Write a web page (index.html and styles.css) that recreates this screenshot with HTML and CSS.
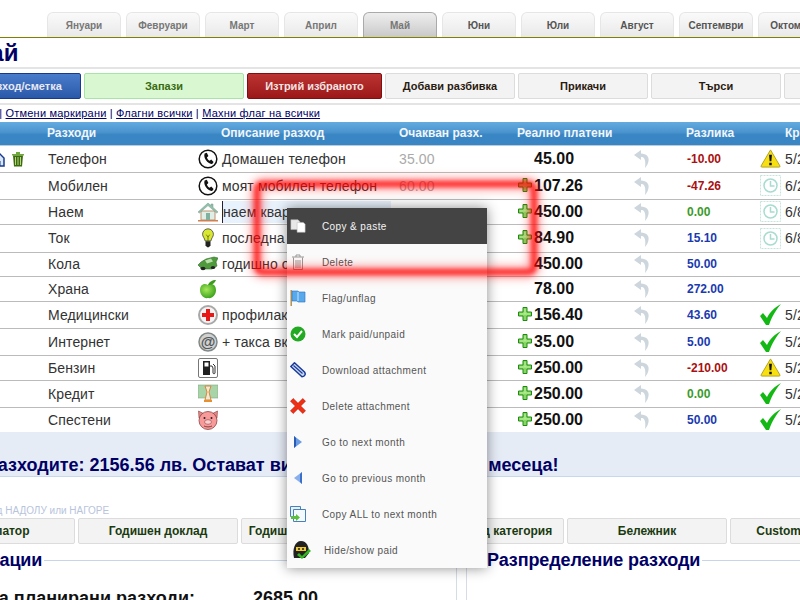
FILE: index.html
```html
<!DOCTYPE html>
<html lang="bg">
<head>
    <meta charset="UTF-8">
    <title>Бюджет - Май</title>
    <link rel="stylesheet" href="styles.css">
</head>
<body>
    <svg class="defs" xmlns="http://www.w3.org/2000/svg">
        <symbol id="i-phone" viewBox="0 0 20 20">
            <circle cx="10" cy="10" r="8.8" fill="#fff" stroke="#111" stroke-width="1.5"/>
            <path d="M6.6 4.6l2.2-.8 1.6 3.2-1.5 1.4c.5 1.4 1.4 2.6 2.8 3.4l1.5-1.2 2.4 2.4-1.2 1.8c-3.6 1.4-9.6-5.6-7.800-10.200z" fill="#111"/>
        </symbol>
        <symbol id="i-house" viewBox="0 0 20 20">
            <path d="M3 9h14v9H3z" fill="#dfeee6" stroke="#c09070"/>
            <path d="M0 10L10 1l3 2.6V2h2v3.4L20 10l-1.400 1L10 3.600 1.400 11z" fill="#8fc0a8" stroke="#7a9a90" stroke-width=".5"/>
            <path d="M8 11h4v7H8z" fill="#7fb0a0"/>
            <path d="M0 18h20v1.500H0z" fill="#d08050"/>
        </symbol>
        <symbol id="i-bulb" viewBox="0 0 16 24">
            <path d="M8 1a6.500 6.500 0 0 0-6.500 6.500c0 3 2.500 4.500 3 8h7c.5-3.500 3-5 3-8A6.500 6.500 0 0 0 8 1z" fill="#d8e830" stroke="#444"/>
            <path d="M6 8l2 3 2-3M8 11v5" fill="none" stroke="#667010"/>
            <path d="M5 16h6v5l-2 2H7l-2-2z" fill="#222"/>
        </symbol>
        <symbol id="i-car" viewBox="0 0 20 16">
            <path d="M0 9l3-3 5-3 8-2 4 1-2 4 1 4-5 3H4z" fill="#4f9a3c" stroke="#2d6a28" stroke-width=".6"/>
            <path d="M7 4.500l6-2 2 3-6 2z" fill="#b8e0a8"/>
            <ellipse cx="5" cy="12.500" rx="2.500" ry="1.800" fill="#222"/>
            <ellipse cx="15" cy="11.500" rx="2.200" ry="1.600" fill="#222"/>
        </symbol>
        <symbol id="i-apple" viewBox="0 0 18 20">
            <defs><radialGradient id="g-apple" cx=".4" cy=".4" r=".7"><stop offset="0" stop-color="#a6e85a"/><stop offset="1" stop-color="#2f9a16"/></radialGradient></defs>
            <path d="M9 6C5 3.500 1 6 1 11c0 5 4 9 8 8 4 1 8-3 8-8 0-5-4-7.500-8-5z" fill="url(#g-apple)"/>
            <path d="M9 6c1-3 4-5 8-5-1 3-4 5-8 5z" fill="#3c9a1e"/>
        </symbol>
        <symbol id="i-med" viewBox="0 0 20 20">
            <circle cx="10" cy="10" r="9" fill="#f4f4f4" stroke="#a8a8a8" stroke-width="2"/>
            <path d="M8 4h4v4h4v4h-4v4H8v-4H4V8h4z" fill="#e81818"/>
        </symbol>
        <symbol id="i-at" viewBox="0 0 20 20">
            <circle cx="10" cy="10" r="9" fill="#d0d0d0" stroke="#808888" stroke-width="1.500"/>
            <text x="10" y="15" font-family="Liberation Sans, sans-serif" font-size="15" font-weight="bold" fill="#505858" text-anchor="middle">@</text>
        </symbol>
        <symbol id="i-fuel" viewBox="0 0 20 20">
            <rect x=".5" y=".5" width="19" height="19" rx="1.500" fill="#fff" stroke="#777"/>
            <path d="M5 3h7v14H5z" fill="#222"/>
            <path d="M6.500 4.500h4v4h-4z" fill="#fff"/>
            <path d="M12 8h2l1 2v5c0 1 2 1 2 0V8l-2-2" fill="none" stroke="#333"/>
        </symbol>
        <symbol id="i-loan" viewBox="0 0 20 20">
            <rect y="1" width="20" height="13" fill="#a8d4a8" stroke="#80a880" stroke-width=".6"/>
            <path d="M7 2h6l-2 6 2 8H7l2-8z" fill="#f0e8d8" stroke="#d88838"/>
            <path d="M6 16h8v2H6z" fill="#e89030"/>
        </symbol>
        <symbol id="i-pig" viewBox="0 0 20 20">
            <path d="M.5 1l5 2.500h9L19.500 1 19 8H1z" fill="#e88888" stroke="#8a4040" stroke-width=".6"/>
            <circle cx="10" cy="10.500" r="9" fill="#f89a9a" stroke="#8a4040" stroke-width=".8"/>
            <circle cx="6.500" cy="8" r="1" fill="#222"/>
            <circle cx="13.500" cy="8" r="1" fill="#222"/>
            <ellipse cx="10" cy="12" rx="3.500" ry="2.300" fill="#fcd0d0" stroke="#8a4040" stroke-width=".6"/>
            <path d="M6 16c2 1.200 6 1.200 8 0" fill="none" stroke="#8a4040"/>
        </symbol>
        <symbol id="i-plus" viewBox="0 0 14 14">
            <path d="M5 .5h4v4.500h4.500v4H9v4.500H5V9H.5V5H5z" fill="#86d862" stroke="#1f8a10"/>
            <path d="M6.500 2h1v4.500H12v1H2v-1h4.500z" fill="#c0f4a0"/>
        </symbol>
        <symbol id="i-undo" viewBox="0 0 16 18">
            <path d="M7 0L0 5l7 5V7c3.500 0 5 3 4 11 4-4 7-14-4-14.500z" fill="#cdd6dc"/>
        </symbol>
        <symbol id="i-warn" viewBox="0 0 22 20">
            <path d="M11 1L21 18a1 1 0 0 1-1 1H2a1 1 0 0 1-1-1z" fill="#f8e010" stroke="#b0a020"/>
            <path d="M9.500 6h3l-.6 7h-1.800zM9.700 14.500h2.600V17H9.700z" fill="#111"/>
        </symbol>
        <symbol id="i-check" viewBox="0 0 21 21">
            <path d="M0 12l3-3 4 5C10 8 14 4 21 0c-5 6-9 12-12 21h-3z" fill="#14b814"/>
        </symbol>
        <symbol id="i-clock" viewBox="0 0 21 21">
            <rect x=".5" y=".5" width="20" height="20" fill="#fff" stroke="#c4e4dc" stroke-dasharray="2 1"/>
            <circle cx="10.500" cy="10.500" r="6.500" fill="none" stroke="#a8dcd0" stroke-width="1.500"/>
            <path d="M10.500 6v5h4" fill="none" stroke="#a8dcd0" stroke-width="1.500"/>
        </symbol>
        <symbol id="i-edit" viewBox="0 0 14 16">
            <path d="M1 7l6-6 6 6v8H1z" fill="#d8e8f8" stroke="#1a3a90" stroke-width="1.500"/>
            <path d="M5 15v-5h4v5" fill="none" stroke="#1a3a90"/>
        </symbol>
        <symbol id="i-bin" viewBox="0 0 14 16">
            <path d="M1 3h12v1.500H1zM5 1h4v2H5z" fill="#6cab34"/>
            <path d="M2 4.500h10l-1 11H3z" fill="#3c6a10"/>
            <path d="M4.500 6v8M7 6v8M9.500 6v8" stroke="#b8d880"/>
        </symbol>
        <symbol id="m-copy" viewBox="0 0 18 16">
            <path d="M1 1h8l2 2v9H1z" fill="#e8e8e8" stroke="#bbb" stroke-width=".6"/>
            <path d="M8 4h7l2 2v9H8z" fill="#fff" stroke="#bbb" stroke-width=".6"/>
        </symbol>
        <symbol id="m-bin" viewBox="0 0 14 16">
            <path d="M1 3h12M5 3V1h4v2M2.500 3.500v12h9v-12M5 6v8M7 6v8M9 6v8" fill="none" stroke="#999"/>
        </symbol>
        <symbol id="m-flag" viewBox="0 0 16 16">
            <path d="M.5 0h1.400v16H.5z" fill="#b08840"/>
            <path d="M2 1h6l1 1h6v10H8l-1-1H2z" fill="#58a8ec" stroke="#2a70c0" stroke-width=".6"/>
            <path d="M8 2v9" stroke="#c8e4fa"/>
        </symbol>
        <symbol id="m-ok" viewBox="0 0 16 16">
            <circle cx="8" cy="8" r="7.500" fill="#22aa22"/>
            <path d="M4 8l3 3 5-6" fill="none" stroke="#fff" stroke-width="2"/>
        </symbol>
        <symbol id="m-clip" viewBox="0 0 16 16">
            <path d="M.8 4.500L4.500.8l10 9.200c1.500 2 .5 4.500-2.500 4.700z" fill="#c8d8f4" stroke="#1a3a98" stroke-width="1.500" stroke-linejoin="round"/>
            <path d="M3.500 3.500l9 8" stroke="#1a3a98" stroke-width="1.200"/>
        </symbol>
        <symbol id="m-del" viewBox="0 0 15 15">
            <path d="M3 .5l4.500 4.500L12 .5 14.500 3 10 7.500l4.500 4.500-2.500 2.500L7.500 10 3 14.500.5 12 5 7.500.5 3z" fill="#f03014" stroke="#b81808" stroke-width=".6"/>
        </symbol>
        <symbol id="m-next" viewBox="0 0 16 16">
            <path d="M4 2l8 6-8 6z" fill="#6a9ce4"/>
            <path d="M4 2v12l2-2V4z" fill="#2a5ab8"/>
        </symbol>
        <symbol id="m-prev" viewBox="0 0 16 16">
            <path d="M12 2L4 8l8 6z" fill="#8ab0ec"/>
            <path d="M12 2v12l-2-2V4z" fill="#3a70cc"/>
        </symbol>
        <symbol id="m-all" viewBox="0 0 16 16">
            <path d="M.5.500h10v10H.500z" fill="#e4f0fa" stroke="#4a80b8"/>
            <path d="M3.500 3.500h12v12h-12z" fill="#f4f9fd" stroke="#4a80b8"/>
            <path d="M1 10h5V8l4 3.500L6 15v-2H1z" fill="#5cc03c"/>
        </symbol>
        <symbol id="m-ninja" viewBox="0 0 20 18">
            <path d="M2 17C0 8 3 0 9 0s8 6 8 12l-4 5z" fill="#222"/>
            <path d="M4 6h10v4H4z" fill="#f0c830"/>
            <circle cx="7" cy="8" r="1" fill="#222"/>
            <circle cx="11" cy="8" r="1" fill="#222"/>
            <path d="M7 12l3 3 7-7 2 2-9 8-5-4z" fill="#34b820"/>
        </symbol>
    </svg>

    <div class="page">
        <div class="tabs">
            <a class="tab">Януари</a>
            <a class="tab">Февруари</a>
            <a class="tab">Март</a>
            <a class="tab">Април</a>
            <a class="tab active">Май</a>
            <a class="tab later">Юни</a>
            <a class="tab later">Юли</a>
            <a class="tab later">Август</a>
            <a class="tab later">Септември</a>
            <a class="tab later">Октомври</a>
        </div>

        <h1 class="month">Май</h1>

        <div class="toolbar">
            <button class="btn btn-blue w141">Нов разход/сметка</button>
            <button class="btn btn-green w160">Запази</button>
            <button class="btn btn-red w135">Изтрий избраното</button>
            <button class="btn w130">Добави разбивка</button>
            <button class="btn w130">Прикачи</button>
            <button class="btn w130">Търси</button>
            <button class="btn w130">Копирай</button>
        </div>

        <div class="links">
            <a>Маркирай всички</a> | <a>Отмени маркирани</a> | <a>Флагни всички</a> | <a>Махни флаг на всички</a>
        </div>

        <table class="bills">
            <thead>
                <tr>
                    <th class="c-act"></th>
                    <th class="c-name">Разходи</th>
                    <th class="c-desc">Описание разход</th>
                    <th class="c-exp">Очакван разх.</th>
                    <th class="c-paid">Реално платени</th>
                    <th class="c-undo"></th>
                    <th class="c-diff">Разлика</th>
                    <th class="c-due">Краен срок</th>
                </tr>
            </thead>
            <tbody>
                <tr class="h27">
                    <td class="act"><svg class="ic-edit"><use href="#i-edit"/></svg><svg class="ic-bin"><use href="#i-bin"/></svg></td>
                    <td class="name">Телефон</td>
                    <td><span class="desc"><svg class="ic"><use href="#i-phone"/></svg>Домашен телефон</span></td>
                    <td class="exp">35.00</td>
                    <td class="paid"><span class="noplus"></span>45.00</td>
                    <td><svg class="ic-undo"><use href="#i-undo"/></svg></td>
                    <td class="diff neg">-10.00</td>
                    <td><span class="due"><svg class="ic-state"><use href="#i-warn"/></svg>5/25/2012</span></td>
                </tr>
                <tr class="h27">
                    <td></td>
                    <td class="name">Мобилен</td>
                    <td><span class="desc"><svg class="ic"><use href="#i-phone"/></svg>моят мобилен телефон</span></td>
                    <td class="exp">60.00</td>
                    <td class="paid"><svg class="ic-plus"><use href="#i-plus"/></svg>107.26</td>
                    <td><svg class="ic-undo"><use href="#i-undo"/></svg></td>
                    <td class="diff neg">-47.26</td>
                    <td><span class="due"><svg class="ic-state"><use href="#i-clock"/></svg>6/25/2012</span></td>
                </tr>
                <tr class="h25">
                    <td></td>
                    <td class="name">Наем</td>
                    <td><span class="desc"><svg class="ic"><use href="#i-house"/></svg><span class="focused">наем квартира</span></span></td>
                    <td class="exp"></td>
                    <td class="paid"><svg class="ic-plus"><use href="#i-plus"/></svg>450.00</td>
                    <td><svg class="ic-undo"><use href="#i-undo"/></svg></td>
                    <td class="diff zero">0.00</td>
                    <td><span class="due"><svg class="ic-state"><use href="#i-clock"/></svg>6/8/2012</span></td>
                </tr>
                <tr class="h28">
                    <td></td>
                    <td class="name">Ток</td>
                    <td><span class="desc"><svg class="ic"><use href="#i-bulb"/></svg>последна сметка</span></td>
                    <td class="exp"></td>
                    <td class="paid"><svg class="ic-plus"><use href="#i-plus"/></svg>84.90</td>
                    <td><svg class="ic-undo"><use href="#i-undo"/></svg></td>
                    <td class="diff pos">15.10</td>
                    <td><span class="due"><svg class="ic-state"><use href="#i-clock"/></svg>6/8/2012</span></td>
                </tr>
                <tr class="h24">
                    <td></td>
                    <td class="name">Кола</td>
                    <td><span class="desc"><svg class="ic"><use href="#i-car"/></svg>годишно обслужване</span></td>
                    <td class="exp"></td>
                    <td class="paid"><span class="noplus"></span>450.00</td>
                    <td><svg class="ic-undo"><use href="#i-undo"/></svg></td>
                    <td class="diff pos">50.00</td>
                    <td></td>
                </tr>
                <tr class="h25">
                    <td></td>
                    <td class="name">Храна</td>
                    <td><span class="desc"><svg class="ic"><use href="#i-apple"/></svg></span></td>
                    <td class="exp"></td>
                    <td class="paid"><span class="noplus"></span>78.00</td>
                    <td><svg class="ic-undo"><use href="#i-undo"/></svg></td>
                    <td class="diff pos">272.00</td>
                    <td></td>
                </tr>
                <tr class="h27">
                    <td></td>
                    <td class="name">Медицински</td>
                    <td><span class="desc"><svg class="ic"><use href="#i-med"/></svg>профилактика</span></td>
                    <td class="exp"></td>
                    <td class="paid"><svg class="ic-plus"><use href="#i-plus"/></svg>156.40</td>
                    <td><svg class="ic-undo"><use href="#i-undo"/></svg></td>
                    <td class="diff pos">43.60</td>
                    <td><span class="due"><svg class="ic-state"><use href="#i-check"/></svg>5/25/2012</span></td>
                </tr>
                <tr class="h27">
                    <td></td>
                    <td class="name">Интернет</td>
                    <td><span class="desc"><svg class="ic"><use href="#i-at"/></svg>+ такса вкл.</span></td>
                    <td class="exp"></td>
                    <td class="paid"><svg class="ic-plus"><use href="#i-plus"/></svg>35.00</td>
                    <td><svg class="ic-undo"><use href="#i-undo"/></svg></td>
                    <td class="diff pos">5.00</td>
                    <td><span class="due"><svg class="ic-state"><use href="#i-check"/></svg>5/25/2012</span></td>
                </tr>
                <tr class="h25">
                    <td></td>
                    <td class="name">Бензин</td>
                    <td><span class="desc"><svg class="ic"><use href="#i-fuel"/></svg></span></td>
                    <td class="exp"></td>
                    <td class="paid"><svg class="ic-plus"><use href="#i-plus"/></svg>250.00</td>
                    <td><svg class="ic-undo"><use href="#i-undo"/></svg></td>
                    <td class="diff neg">-210.00</td>
                    <td><span class="due"><svg class="ic-state"><use href="#i-warn"/></svg>5/25/2012</span></td>
                </tr>
                <tr class="h27">
                    <td></td>
                    <td class="name">Кредит</td>
                    <td><span class="desc"><svg class="ic"><use href="#i-loan"/></svg></span></td>
                    <td class="exp"></td>
                    <td class="paid"><svg class="ic-plus"><use href="#i-plus"/></svg>250.00</td>
                    <td><svg class="ic-undo"><use href="#i-undo"/></svg></td>
                    <td class="diff zero">0.00</td>
                    <td><span class="due"><svg class="ic-state"><use href="#i-check"/></svg>5/25/2012</span></td>
                </tr>
                <tr class="h25 last">
                    <td></td>
                    <td class="name">Спестени</td>
                    <td><span class="desc"><svg class="ic"><use href="#i-pig"/></svg></span></td>
                    <td class="exp"></td>
                    <td class="paid"><svg class="ic-plus"><use href="#i-plus"/></svg>250.00</td>
                    <td><svg class="ic-undo"><use href="#i-undo"/></svg></td>
                    <td class="diff pos">50.00</td>
                    <td><span class="due"><svg class="ic-state"><use href="#i-check"/></svg>5/25/2012</span></td>
                </tr>
            </tbody>
        </table>

        <div class="summary">Разходите: 2156.56 лв. Остават ви 528.44 лв. до края на месеца!</div>

        <p class="hint">Премести ред НАДОЛУ или НАГОРЕ</p>

        <div class="toolbar reports">
            <button class="btn w160">Калкулатор</button>
            <button class="btn w160">Годишен доклад</button>
            <button class="btn w160">Годишен план и бюджет</button>
            <button class="btn w160">Разходи над категория</button>
            <button class="btn w160">Бележник</button>
            <button class="btn w160">Custom категории</button>
        </div>

        <div class="sections">
            <section class="sec sec-left">
                <h2 class="sec-title">Операции</h2>
                <div class="total"><span class="total-label">Сума планирани разходи:</span><span>2685.00</span></div>
            </section>
            <section class="sec sec-right">
                <h2 class="sec-title">Разпределение разходи</h2>
            </section>
        </div>
    </div>

    <ul class="menu">
        <li class="active"><svg class="mi"><use href="#m-copy"/></svg>Copy &amp; paste</li>
        <li><svg class="mi"><use href="#m-bin"/></svg>Delete</li>
        <li><svg class="mi"><use href="#m-flag"/></svg>Flag/unflag</li>
        <li><svg class="mi"><use href="#m-ok"/></svg>Mark paid/unpaid</li>
        <li><svg class="mi"><use href="#m-clip"/></svg>Download attachment</li>
        <li><svg class="mi"><use href="#m-del"/></svg>Delete attachment</li>
        <li><svg class="mi"><use href="#m-next"/></svg>Go to next month</li>
        <li><svg class="mi"><use href="#m-prev"/></svg>Go to previous month</li>
        <li><svg class="mi"><use href="#m-all"/></svg>Copy ALL to next month</li>
        <li class="wide"><svg class="mi"><use href="#m-ninja"/></svg>Hide/show paid</li>
    </ul>

    <div class="redmark"></div>
</body>
</html>
```

FILE: styles.css
```css
html, body {
    margin: 0;
    height: 600px;
    overflow: hidden;
}
body {
    font-family: "Liberation Sans", Arial, sans-serif;
    background: white;
    color: #333;
}
.defs {
    position: absolute;
    width: 0;
    height: 0;
}
.page {
    margin-left: -60px;
    width: 1100px;
}

/* month tabs */
.tabs {
    display: flex;
    gap: 5px;
    height: 25px;
    padding: 12px 0 0 107px;
    border-bottom: 1px solid #808000;
}
.tab {
    box-sizing: border-box;
    width: 74px;
    height: 25px;
    line-height: 25px;
    text-align: center;
    font-size: 10px;
    font-weight: bold;
    color: #777;
    background: linear-gradient(#fafafa, #e9e9e9);
    border: 1px solid #e6e6e6;
    border-bottom: none;
    border-radius: 6px 6px 0 0;
}
.tab.later {
    color: #555;
}
.tab.active {
    background: linear-gradient(#eee, #c9c9c9);
    border-color: #aaa;
}

.month {
    margin: 0;
    height: 29px;
    padding-left: 30px;
    font-size: 24px;
    line-height: 29px;
    color: #000066;
    border-bottom: 2px solid #e4e4e4;
}

/* buttons */
.toolbar {
    display: flex;
    gap: 3px;
    padding: 4px 0;
    border-bottom: 2px solid #e4e4e4;
}
.btn {
    box-sizing: border-box;
    height: 26px;
    padding: 0;
    font-family: inherit;
    font-size: 11px;
    font-weight: bold;
    color: #2a1a10;
    background: #f3f3f3;
    border: 1px solid #dcdcdc;
    border-radius: 2px;
}
.btn-blue {
    color: #e8e8f4;
    background: linear-gradient(#4a7ccc, #2a58a8);
    border-color: #1a3a88;
}
.btn-green {
    color: #3a6a10;
    background: #d9f8d2;
    border-color: #a8e4a8;
}
.btn-red {
    color: #f4e4e4;
    background: linear-gradient(#bc3434, #9c1818);
    border-color: #801010;
}
.w130 { width: 130px; }
.w141 { width: 141px; }
.w135 { width: 135px; }
.w160 { width: 160px; }

.links {
    height: 17px;
    margin-left: -35px;
    font-size: 11px;
    line-height: 16px;
    white-space: nowrap;
    color: #000066;
    letter-spacing: .2px;
}
.links a {
    text-decoration: underline;
}

/* bills table */
.bills {
    table-layout: fixed;
    width: 1100px;
    border-collapse: collapse;
    font-size: 14px;
    letter-spacing: .12px;
}
.bills th {
    box-sizing: border-box;
    height: 23px;
    padding: 0;
    text-align: left;
    font-size: 12px;
    color: #f0f6fb;
    letter-spacing: 0;
    background: linear-gradient(#63abdf, #4a93ce 45%, #3a85c3 55%, #3a86c5);
    border-bottom: 1px solid #b8ccdc;
    white-space: nowrap;
}
.c-act { width: 107px; }
.c-name { width: 150px; }
.bills .c-desc { width: 202px; padding-left: 24px; }
.c-exp { width: 118px; }
.c-paid { width: 117px; }
.c-undo { width: 52px; }
.c-diff { width: 74px; }
.bills .c-due { padding-left: 25px; }
.bills td {
    padding: 0;
    border-bottom: 1px solid #bbb;
    white-space: nowrap;
    overflow: hidden;
}
.bills .last td {
    border-bottom: none;
}
.h24 { height: 24px; }
.h25 { height: 25px; }
.h27 { height: 27px; }
.h28 { height: 28px; }
.bills .name {
    padding-left: 1px;
}
.bills .act {
    text-align: right;
    padding-right: 22px;
}
.ic-edit {
    width: 14px;
    height: 16px;
    margin-right: 6px;
    vertical-align: middle;
}
.ic-bin {
    width: 14px;
    height: 16px;
    vertical-align: middle;
}
.desc {
    display: flex;
    align-items: center;
    gap: 4px;
    padding-left: 1px;
}
.ic {
    width: 20px;
    height: 20px;
    flex: none;
}
.focused {
    width: 168px;
    height: 22px;
    line-height: 22px;
    background: #e8f2fc;
    border-left: 1px solid #223;
}
.exp {
    color: #aaa;
}
.paid {
    font-size: 16px;
    font-weight: bold;
    color: #111;
    letter-spacing: 0;
}
.ic-plus {
    width: 14px;
    height: 14px;
    margin: 0 2px 0 1px;
    vertical-align: -1px;
}
.noplus {
    display: inline-block;
    width: 17px;
}
.ic-undo {
    width: 16px;
    height: 18px;
    vertical-align: middle;
}
.bills .diff {
    font-size: 12px;
    font-weight: bold;
    letter-spacing: 0;
    padding-left: 1px;
}
.neg { color: #aa1010; }
.pos { color: #1a3ab0; }
.zero { color: #3a9a2a; }
.due {
    display: flex;
    align-items: center;
    gap: 4px;
}
.ic-state {
    width: 21px;
    height: 21px;
    flex: none;
}

.summary {
    box-sizing: border-box;
    height: 45px;
    padding: 22px 0 0 46px;
    font-size: 18px;
    line-height: 22px;
    font-weight: bold;
    white-space: nowrap;
    color: #000066;
    background: #e6ecf6;
    border-bottom: 1px solid #c8d8ec;
}
.hint {
    margin: 0 0 0 -3px;
    height: 41px;
    padding: 27px 0 0 0;
    box-sizing: border-box;
    font-size: 10px;
    line-height: 14px;
    color: #b8c4dc;
}
.reports {
    margin-left: -25px;
    padding: 0;
    border: none;
}
.reports .btn {
    font-size: 12px;
    color: #1a3a10;
}

/* bottom sections */
.sections {
    display: flex;
    gap: 9px;
}
.sec {
    box-sizing: border-box;
    height: 60px;
}
.sec-left {
    width: 517px;
    padding-left: 14px;
    border-right: 1px solid #d4dce8;
}
.sec-right {
    flex: 1;
    padding-left: 20px;
    border-left: 1px solid #d4dce8;
}
.sec-title {
    display: flex;
    align-items: center;
    gap: 2px;
    margin: 5px 0 0;
    font-size: 18px;
    line-height: 22px;
    letter-spacing: -.1px;
    color: #000066;
}
.sec-title::after {
    content: "";
    flex: 1;
    height: 1px;
    background: #c8d4e8;
}
.total {
    display: flex;
    justify-content: space-between;
    width: 364px;
    margin-top: 17px;
    font-size: 18px;
    font-weight: bold;
    color: #111;
}
.total-label {
    margin-left: 9px;
}

/* context menu over the table */
.menu {
    position: absolute;
    left: 287px;
    top: 208px;
    width: 200px;
    margin: 0;
    padding: 0;
    list-style: none;
    background: #fafafa;
    box-shadow: 0 0 12px rgba(0, 0, 0, .45);
    font-size: 10px;
    letter-spacing: .4px;
    color: #555;
}
.menu li {
    display: flex;
    align-items: center;
    height: 36px;
    padding-left: 3px;
}
.menu li.active {
    background: #444;
    color: #f4f4f4;
}
.mi {
    width: 16px;
    height: 16px;
    margin-right: 16px;
    flex: none;
}
.menu li.wide {
    padding-left: 5px;
}
.menu li.wide .mi {
    width: 20px;
    height: 20px;
    margin-right: 12px;
}

/* red attention frame drawn on top of everything */
.redmark {
    position: absolute;
    left: 254px;
    top: 181px;
    width: 271px;
    height: 82px;
    border: 6px solid rgba(255, 0, 0, .85);
    border-radius: 8px;
    box-shadow: 0 0 8px 2px rgba(255, 0, 0, .45), inset 0 0 8px 2px rgba(255, 0, 0, .45);
    filter: blur(2.5px);
    pointer-events: none;
}
```
